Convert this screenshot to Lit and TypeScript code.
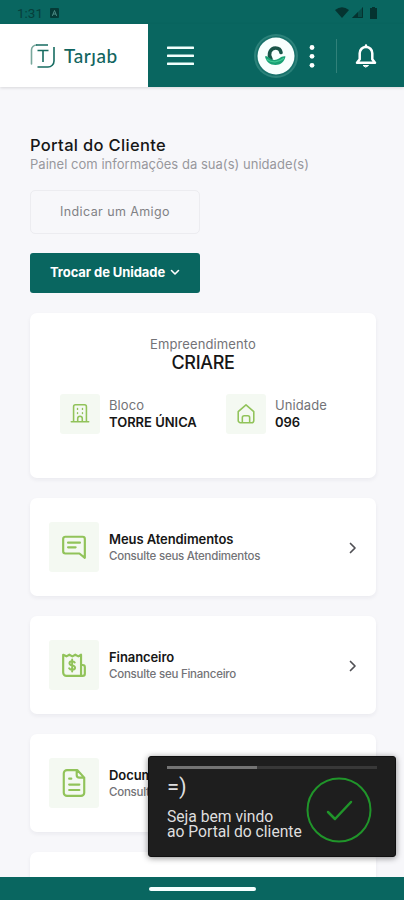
import { LitElement, html, css, svg } from "lit";
import { customElement } from "lit/decorators.js";

const icons = {
  building: svg`<path d="M5 20V4a2 2 0 0 1 2-2h10a2 2 0 0 1 2 2v16M2.5 20.5h19M9.5 20v-3a2.5 2.5 0 0 1 5 0v3"/><path d="M9.3 6v1M9.3 10.500v1M14.7 6v1M14.7 10.500v1" stroke-width="1.500"/>`,
  home: svg`<path d="M3.500 9.500 12 2l8.500 7.500V19a2.500 2.500 0 0 1-2.500 2.500H6A2.500 2.500 0 0 1 3.500 19ZM8 21v-5a2 2 0 0 1 2-2h4a2 2 0 0 1 2 2v5"/>`,
  chat: svg`<path d="M22 22l-5-4H4a2 2 0 0 1-2-2V4.500a2 2 0 0 1 2-2h16a2 2 0 0 1 2 2ZM6.500 8h11M6.500 12.300h7"/>`,
  bill: svg`<path d="M2 2.500 5 4l2.700-1.500L10.500 4l2.700-1.500L16 4l2.500-1.500V22H5a3 3 0 0 1-3-3ZM18.500 12H20a2 2 0 0 1 2 2v6a2 2 0 0 1-2 2h-3"/><path d="M12.700 9.700c-.5-.8-1.300-1.200-2.500-1.200-1.500 0-2.400.7-2.400 1.800 0 2.800 5.200 1.400 5.200 4.200 0 1.200-1.100 1.900-2.700 1.900-1.300 0-2.300-.5-2.800-1.400M10.300 7v11" stroke-width="1.800"/>`,
  doc: svg`<path d="M14.500 1H5a3 3 0 0 0-3 3v18a3 3 0 0 0 3 3h13a3 3 0 0 0 3-3V8ZM14 1v4.500A2.500 2.500 0 0 0 16.500 8H21M7 9h2M7 14.500h9.500M7 19.500h9.500"/>`,
};

@customElement("app-root")
export class AppRoot extends LitElement {
  static styles = css`
    :host { display: block; position: relative; width: 404px; height: 900px; overflow: hidden; background: #f7f7fa; font-family: Inter, Roboto, sans-serif; color: #161616; }
    * { box-sizing: border-box; }
    svg { display: block; flex: none; stroke-linecap: round; stroke-linejoin: round; }
    .screen { height: 900px; display: flex; flex-direction: column; }
    .status { height: 24px; flex: none; background: #096660; display: flex; align-items: center; padding: 1px 26px 0 17px; color: #063f3b; font: 13.5px Roboto, sans-serif; }
    .time { width: 33px; }
    .signals { margin-left: auto; }
    .header { height: 63px; flex: none; background: #096660; display: flex; align-items: center; box-shadow: 0 1px 3px rgba(0,0,0,.13); }
    .brand { width: 148px; height: 63px; background: #fff; padding-left: 30px; display: flex; align-items: center; gap: 8px; color: #12655f; font: 500 19px/22px Lato, sans-serif; }
    .wordmark { letter-spacing: .55px; }
    .menu { margin-left: 19px; }
    .avatar { margin-left: 59px; }
    .dots { margin-left: 9px; }
    .divider { width: 1px; height: 34px; margin-left: 20px; background: #31817a; }
    .bell { margin-left: 18px; }
    .content { flex: 1; min-height: 0; overflow: hidden; padding: 48px 28px 0 30px; }
    h1 { margin: 0; font-size: 16.500px; line-height: 20px; font-weight: 500; letter-spacing: .33px; }
    .sub { font-size: 13px; line-height: 18px; color: #98989d; letter-spacing: .03px; }
    .invite { width: 170px; height: 44px; margin-top: 17px; border: 1px solid #ececf0; border-radius: 5px; display: flex; align-items: center; justify-content: center; font-size: 12.500px; color: #818185; letter-spacing: .4px; padding-bottom: 2px; }
    .switch { width: 170px; height: 40px; margin-top: 19px; border-radius: 3px; background: #096660; color: #fff; display: flex; align-items: center; padding-left: 20px; padding-bottom: 2px; gap: 5px; font-size: 13px; font-weight: 700; letter-spacing: -.08px; }
    .card { border-radius: 7px; background: #fff; box-shadow: 0 2px 4px rgba(30,30,60,.06); margin-top: 20px; }
    .summary { height: 165px; padding-top: 22px; text-align: center; }
    .label { font-size: 13px; line-height: 18px; color: #737377; letter-spacing: .1px; }
    .name { font-size: 18px; line-height: 19px; font-weight: 500; letter-spacing: -.3px; }
    .units { margin: 22px 0 0 30px; display: grid; grid-template-columns: 166px 1fr; text-align: left; }
    .unit { display: flex; gap: 9px; }
    .tile { flex: none; display: flex; align-items: center; justify-content: center; width: 40px; height: 40px; border-radius: 3px; background: #f4f9f2; }
    .tile svg { stroke: #91c35a; }
    .value { font-size: 13px; line-height: 17px; font-weight: 600; white-space: nowrap; letter-spacing: -.02px; }
    .unit-text { padding-top: 2px; }
    .row { height: 98px; display: flex; align-items: center; padding: 0 18px 0 19px; }
    .row .tile { width: 50px; height: 50px; margin-right: 10px; }
    .title { font-size: 13px; line-height: 17px; font-weight: 600; letter-spacing: -.08px; }
    .detail { font-size: 11.500px; line-height: 17px; color: #737377; font-weight: 500; letter-spacing: -.24px; }
    .row-text { padding-top: 1px; }
    .arrow { margin-left: auto; position: relative; top: 1px; }
    .nav { height: 23px; flex: none; background: #096660; display: flex; justify-content: center; padding-top: 10px; }
    .pill { width: 107px; height: 4px; border-radius: 2px; background: #f5ffff; }
    .toast { position: absolute; left: 148px; top: 756px; width: 248px; height: 101px; border-radius: 3px; background: #1e1e1e; color: #dedede; border: 1px solid #101010; box-shadow: 0 1px 6px rgba(0,0,0,.45); padding: 9px 18px 0; font-family: Roboto, sans-serif; }
    .progress { height: 3px; background: #383838; }
    .done { height: 3px; width: 90px; background: #747474; }
    .message { display: flex; justify-content: space-between; margin-right: 5px; }
    .face { font-size: 22px; line-height: 24px; margin-top: 6px; }
    .welcome { font-size: 15.700px; line-height: 15px; margin-top: 10px; white-space: nowrap; letter-spacing: -.02px; }
    .check { margin-top: 8px; margin-left: -4px; }
  `;

  private icon(name: keyof typeof icons, size: number, stroke: number) {
    return html`<svg width=${size} height=${name === "doc" ? 28 : size} viewBox=${name === "doc" ? "0 0 23 26" : "0 0 24 24"} fill="none" stroke-width=${stroke}>${icons[name]}</svg>`;
  }

  private unit(icon: keyof typeof icons, label: string, value: string) {
    return html`<div class="unit"><div class="tile">${this.icon(icon, 22, 1.7)}</div><div class="unit-text"><div class="label">${label}</div><div class="value">${value}</div></div></div>`;
  }

  private row(icon: keyof typeof icons, title: string, detail: string) {
    return html`<div class="card row"><div class="tile">${this.icon(icon, 26, 2)}</div>
      <div class="row-text"><div class="title">${title}</div><div class="detail">${detail}</div></div>
      <svg class="arrow" width="10" height="12" viewBox="0 0 10 12" fill="none" stroke="#505055" stroke-width="1.700"><path d="m2.500 1.500 4.500 4.500L2.500 10.500"/></svg></div>`;
  }

  render() {
    return html`<div class="screen">
      <div class="status"><span class="time">1:31</span>
        <svg width="9" height="10" viewBox="0 0 9 10"><rect width="9" height="10" rx="1" fill="#053b37"/><path d="m2.500 7.500 2-5 2 5M3.300 6h2.400" fill="none" stroke="#4c8b85"/></svg>
        <svg class="signals" width="43" height="14" viewBox="0 0 43 14" fill="#053330"><path d="M0 4q7-5.500 14 0L7 12Z"/><path d="M17 12 28 1v11Z" opacity=".5"/><path d="m17 12 6-6v6Z"/><path d="M27.500 2v9.500H19" fill="none" stroke="#053330"/><path d="M35 2h2V1h3v1h2v11h-7Z"/></svg>
      </div>
      <div class="header">
        <div class="brand">
          <svg width="26" height="26" viewBox="0 0 26 26" fill="none" stroke="#176c61" stroke-width="1.600"><path d="M1.500 21V7a5 5 0 0 1 5-5" stroke="#78a79c"/><path d="M6 2h12M7.500 24H18a6 6 0 0 0 6-6V4M7.500 7.500h11M13 7.500V19" stroke-linecap="butt"/></svg>
          <span class="wordmark">Tarȷab</span>
        </div>
        <svg class="menu" width="27" height="20" viewBox="0 0 27 20" stroke="#f1fffc" stroke-width="2.600"><path d="M1 1.800h25M1 9.800h25M1 17.800h25"/></svg>
        <svg class="avatar" width="46" height="46" viewBox="0 0 46 46" fill="none"><circle cx="23" cy="23" r="22" fill="#2c827a"/><circle cx="23" cy="23" r="20" fill="#17716a"/><circle cx="23" cy="23" r="18.500" fill="#f7fffd"/><path d="M18 26c-3.500-5-.5-11 4.500-11 3 0 5 1.500 5.500 4.500" stroke="#175548" stroke-width="3.600"/><path d="M12 23.500c1.500-.5 3 .3 4.500 1.500 3 2.500 6.500 2.500 9.500.5 2.500-1.800 4.500-2.500 6.500-2-1 5-5 8.500-10 8.500-5.500 0-9.500-3.500-10.500-8.500Z" fill="#18a174"/><path d="M14 26.500c5 3.500 11.500 3 16.500-1" stroke="#3fc792" stroke-width="1.300"/></svg>
        <svg class="dots" width="8" height="24" viewBox="0 0 8 24" fill="#fff"><circle cx="4" cy="3.500" r="2.400"/><circle cx="4" cy="12.300" r="2.400"/><circle cx="4" cy="21.300" r="2.400"/></svg>
        <div class="divider"></div>
        <svg class="bell" width="22" height="26" viewBox="0 0 22 26" fill="none" stroke="#fff" stroke-width="2.500"><path d="M2 19.700h18l-2.700-3.500v-6a6.300 6.300 0 0 0-12.600 0v6ZM11 3.500V2.500"/><path d="M8.500 22.500h5L11 24Z" fill="#fff" stroke-width="1"/></svg>
      </div>
      <main class="content">
        <h1>Portal do Cliente</h1><div class="sub">Painel com informações da sua(s) unidade(s)</div>
        <div class="invite">Indicar um Amigo</div>
        <div class="switch"><span>Trocar de Unidade</span><svg width="10" height="8" viewBox="0 0 10 8" fill="none" stroke="#fff" stroke-width="1.600"><path d="m1.500 2.500 3.500 3.500L8.500 2.500"/></svg></div>
        <section class="card summary"><div class="label">Empreendimento</div><div class="name">CRIARE</div>
          <div class="units">${this.unit("building", "Bloco", "TORRE ÚNICA")}${this.unit("home", "Unidade", "096")}</div>
        </section>
        ${this.row("chat", "Meus Atendimentos", "Consulte seus Atendimentos")}
        ${this.row("bill", "Financeiro", "Consulte seu Financeiro")}
        ${this.row("doc", "Documentos", "Consulte seus Documentos")}
        <div class="card row"></div>
      </main>
      <div class="nav"><div class="pill"></div></div>
    </div>
    <div class="toast"><div class="progress"><div class="done"></div></div>
      <div class="message"><div><div class="face">=)</div><div class="welcome">Seja bem vindo<br>ao Portal do cliente</div></div>
      <svg class="check" width="66" height="66" viewBox="0 0 66 66" fill="none" stroke="#20952a"><circle cx="33" cy="33" r="31.500" stroke-width="2"/><path d="m22 35 7 7 16-17" stroke-width="2.500"/></svg></div>
    </div>`;
  }
}
